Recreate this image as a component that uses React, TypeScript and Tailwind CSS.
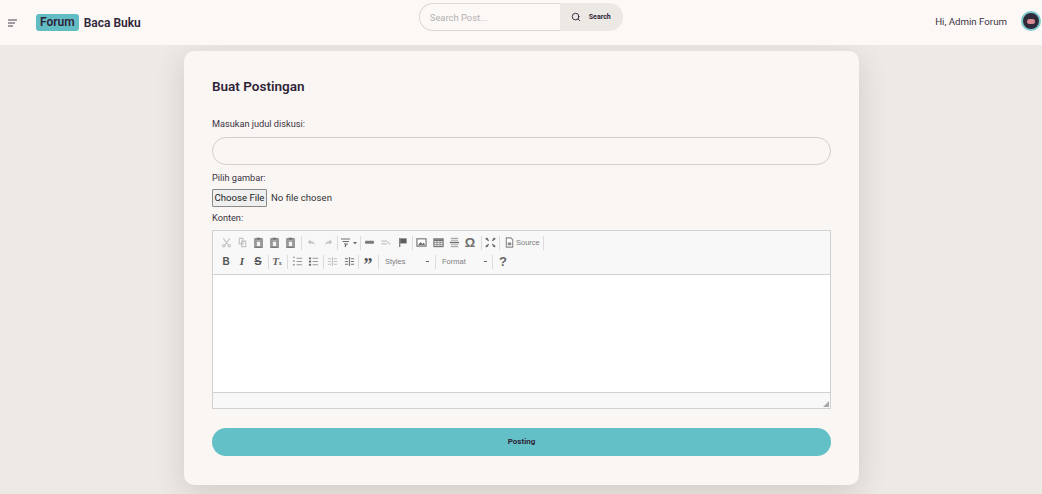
import type { ReactNode } from "react";
import { Search } from "lucide-react";

function Ico({ dim, className = "", children }: { dim?: boolean; className?: string; children: ReactNode }) {
  return (
    <span className={`w-4 h-4 flex items-center justify-center shrink-0 ${className}`}>
      <svg
        width="11"
        height="11"
        viewBox="0 0 12 12"
        fill="none"
        stroke={dim ? "#c2c2c2" : "#6e6e6e"}
        strokeWidth="1.2"
        className="block"
      >
        {children}
      </svg>
    </span>
  );
}

function Sep({ className = "" }: { className?: string }) {
  return <span className={`w-px h-[14px] bg-[#dcdcdc] shrink-0 ${className}`} />;
}

function Paste() {
  return (
    <Ico>
      <rect x="2" y="2" width="8" height="9.5" fill="#b5b5b5" stroke="#7a7a7a" />
      <rect x="4" y="0.8" width="4" height="2" fill="#6e6e6e" stroke="none" />
      <rect x="3.5" y="4.5" width="5" height="6" fill="#f2f2f2" stroke="#7a7a7a" strokeWidth="0.8" />
    </Ico>
  );
}

function Toolbar() {
  return (
    <div className="h-[44px] bg-[#f8f8f8] border-b border-[#d1d1d1] pl-[5px] pt-[2px] font-['Liberation_Sans',sans-serif]">
      <div className="flex items-center h-[19px]">
        <Ico dim>
          <path d="M2.5 1.5 8 9M9.5 1.5 4 9" />
          <circle cx="3" cy="9.5" r="1.3" />
          <circle cx="9" cy="9.5" r="1.3" />
        </Ico>
        <Ico dim>
          <path d="M2.5 1.5h4v6h-4zM5 4.5h4.5v6H5z" />
        </Ico>
        <Paste />
        <Paste />
        <Paste />
        <Sep className="ml-[3px] mr-[1px]" />
        <Ico dim>
          <path d="M5 2.5 2 5.5l3 3V6.7c2.2 0 3.6.5 5 2.3-.5-2.6-2.2-4.2-5-4.4z" fill="#c2c2c2" stroke="none" />
        </Ico>
        <Ico dim className="ml-px">
          <path d="M7 2.5l3 3-3 3V6.7c-2.2 0-3.6.5-5 2.3.5-2.6 2.2-4.2 5-4.4z" fill="#c2c2c2" stroke="none" />
        </Ico>
        <Sep className="ml-px" />
        <span className="w-[20px] h-4 flex items-center shrink-0 pl-[3px]">
          <svg width="17" height="11" viewBox="0 0 17 11" fill="none" stroke="#6e6e6e" strokeWidth="1.2">
            <path d="M0 2h9M1.5 4.5h6.5M3 7h4M4 10l1-2.5" />
            <path d="M12 5h4l-2 2.4z" fill="#6e6e6e" stroke="none" />
          </svg>
        </span>
        <Sep className="ml-[2px]" />
        <Ico>
          <rect x="1" y="4.2" width="10" height="3.2" rx="1.4" fill="#7a7a7a" stroke="none" />
        </Ico>
        <Ico dim>
          <path d="M1.5 4.5h6M1.5 7.5h6" strokeWidth="1.6" />
          <path d="M8 5l3 3" />
        </Ico>
        <Ico className="ml-px">
          <path d="M3 1v10" strokeWidth="1.3" />
          <path d="M3.5 1.5h7v5.5h-7z" fill="#5e5e5e" stroke="none" />
        </Ico>
        <Sep className="ml-[2px]" />
        <Ico>
          <rect x="1" y="2" width="10" height="8" fill="#fff" stroke="#6e6e6e" />
          <path d="M2 9l3-3.5 2 2 1.5-1.5L10 9z" fill="#6e6e6e" stroke="none" />
        </Ico>
        <Ico className="ml-px">
          <rect x="1" y="2" width="10" height="8.5" fill="#fff" stroke="#6e6e6e" />
          <path d="M1 3.5h10" strokeWidth="2" />
          <path d="M1 6.2h10M1 8.4h10M4.3 3v7M7.7 3v7" strokeWidth="0.8" />
        </Ico>
        <Ico>
          <path d="M2 1.5h8M2 3.5h8" stroke="#aaa" />
          <path d="M1 6h10" strokeWidth="1.6" stroke="#6e6e6e" />
          <path d="M2 8.5h8M2 10.5h8" stroke="#aaa" />
        </Ico>
        <span className="w-4 h-4 flex items-center justify-center shrink-0 text-[13px] font-bold text-[#6e6e6e] leading-none">Ω</span>
        <Sep className="ml-[3px]" />
        <Ico>
          <path d="M1 1l3 3M11 1 8 4M1 11l3-3M11 11 8 8" strokeWidth="1.6" />
          <path d="M1 1h2.6L1 3.6zM11 1H8.4L11 3.6zM1 11h2.6L1 8.4zM11 11H8.4L11 8.4z" fill="#6e6e6e" stroke="none" />
        </Ico>
        <Sep className="ml-px" />
        <Ico className="ml-px">
          <path d="M2.5 1h5l2 2v8h-7z" fill="#fff" stroke="#8a8a8a" />
          <rect x="4" y="6" width="4" height="3" fill="#8a8a8a" stroke="none" />
        </Ico>
        <span className="text-[7.5px] text-[#7d7d7d] ml-[-1px] w-[24px] shrink-0">Source</span>
        <Sep className="ml-[3px]" />
      </div>
      <div className="flex items-center h-[19px]">
        <span className="w-4 text-center text-[10px] font-bold text-[#555] shrink-0">B</span>
        <span className="w-4 text-center text-[11px] font-bold italic font-['Liberation_Serif',serif] text-[#555] shrink-0">I</span>
        <span className="w-4 text-center text-[11px] font-bold line-through text-[#555] shrink-0">S</span>
        <Sep className="ml-[2px]" />
        <span className="w-4 h-4 flex items-center justify-center shrink-0 text-[11px] italic font-bold font-['Liberation_Serif',serif] text-[#666]">
          T<sub className="text-[6px] not-italic">x</sub>
        </span>
        <Sep className="ml-[2px]" />
        <Ico dim className="ml-px">
          <path d="M5 2.5h6M5 6h6M5 9.5h6" stroke="#999" />
          <path d="M1 1.5h2M1 5.5h2M1 9.5h2" stroke="#999" strokeWidth="1.5" />
        </Ico>
        <Ico>
          <path d="M5 2.5h6M5 6h6M5 9.5h6" stroke="#999" />
          <path d="M1 2.5h2.4M1 6h2.4M1 9.5h2.4" strokeWidth="2" />
        </Ico>
        <Sep className="ml-[2px]" />
        <Ico dim>
          <path d="M1 3h3.5M1 6h3.5M1 9h3.5M6 1v10M7.5 3h3.5M7.5 6h3.5M7.5 9h3.5" />
        </Ico>
        <Ico className="ml-px">
          <path d="M1 3h3.5M1 6h3.5M1 9h3.5M6 1v10M7.5 3h3.5M7.5 6h3.5M7.5 9h3.5" stroke="#777" />
        </Ico>
        <Sep className="ml-px" />
        <span className="ml-px w-4 h-4 flex items-center justify-center shrink-0 text-[18px] font-bold text-[#555] font-['Liberation_Serif',serif] leading-none pt-[7px]">”</span>
        <Sep className="ml-[2px]" />
        <span className="text-[7.5px] text-[#7d7d7d] ml-[6px] w-[41px] shrink-0">Styles</span>
        <span className="w-[3px] h-px bg-[#666] shrink-0 mr-[6px]" />
        <Sep />
        <span className="text-[7.5px] text-[#7d7d7d] ml-[6px] w-[42px] shrink-0">Format</span>
        <span className="w-[3px] h-px bg-[#666] shrink-0 mr-[5px]" />
        <Sep />
        <span className="text-[13px] font-bold text-[#666] ml-[6px]">?</span>
      </div>
    </div>
  );
}

export default function App() {
  return (
    <div className="h-[494px] overflow-hidden bg-[#ede9e5] font-['Roboto',sans-serif] text-[#2f2438]">
      <header className="h-[45px] bg-[#fbf8f5] flex items-center relative">
        <svg width="12" height="12" viewBox="0 0 12 12" className="ml-[7px] mt-[1px]" stroke="#4a4050" strokeWidth="1">
          <path d="M1 3h9M1 6h7M1 9h5" />
        </svg>
        <span className="ml-[17px] h-[17px] px-[4px] rounded-[3px] bg-[#62bcc4] text-[12px] font-semibold leading-[17px]">Forum</span>
        <span className="ml-[5px] text-[12px] font-semibold">Baca Buku</span>
        <div className="ml-[278px] mb-[11px] flex h-[28px] w-[204px]">
          <input
            placeholder="Search Post..."
            className="w-[141px] h-full pl-[10px] text-[9.4px] bg-transparent border border-[#dcd7d2] border-r-0 rounded-l-full outline-none placeholder:text-[#b5b0b4]"
          />
          <button className="flex-1 h-full bg-[#ece8e4] rounded-r-full flex items-center gap-[8px] pl-[11px] text-[7px] font-bold">
            <Search size={10} strokeWidth={2.2} />
            Search
          </button>
        </div>
        <span className="ml-auto text-[9.7px] text-[#3c3344]">Hi, Admin Forum</span>
        <span className="ml-[14px] mr-[1px] mb-[3px] w-[20px] h-[20px] rounded-full bg-[#2f2a3a] border-2 border-[#7cc8cc] flex items-center justify-center">
          <span className="w-[8px] h-[5px] rounded-full bg-[#d98a94]" />
        </span>
      </header>
      <main className="flex justify-center pt-[6px]">
        <section className="ml-[1px] w-[675px] h-[434px] bg-[#faf6f3] rounded-[10px] shadow-[0_8px_30px_rgba(60,50,45,0.16)] px-[28px] pt-[28px]">
          <h1 className="text-[13.5px] font-semibold leading-[15px]">Buat Postingan</h1>
          <label className="block mt-[24px] text-[9.2px] leading-[12px] text-[#3c3344]">Masukan judul diskusi:</label>
          <input className="block mt-[7px] w-full h-[28px] rounded-full bg-transparent border border-[#d4cfca] outline-none" />
          <label className="block mt-[7px] text-[9.2px] leading-[12px] text-[#3c3344]">Pilih gambar:</label>
          <div className="mt-[5px] flex items-center text-[9.6px] text-[#333] h-[18px]">
            <span className="h-[18px] w-[55px] text-center bg-[#efefef] border border-[#8a8a8a] rounded-[1px] leading-[16px] text-[#222] mr-[4px]">Choose File</span>
            No file chosen
          </div>
          <label className="block mt-[5px] text-[9.2px] leading-[12px] text-[#3c3344]">Konten:</label>
          <div className="mt-[6px] h-[179px] border border-[#d1d1d1] flex flex-col">
            <Toolbar />
            <div className="flex-1 bg-white" />
            <div className="h-[16px] bg-[#f8f8f8] border-t border-[#d1d1d1] flex justify-end items-end pr-[1px] pb-[1px]">
              <svg width="6" height="6" viewBox="0 0 6 6">
                <path d="M6 0v6H0z" fill="#a8a8a8" />
              </svg>
            </div>
          </div>
          <button className="block mt-[19px] w-full h-[28px] rounded-full bg-[#63c0c6] text-[8px] font-bold">Posting</button>
        </section>
      </main>
    </div>
  );
}
